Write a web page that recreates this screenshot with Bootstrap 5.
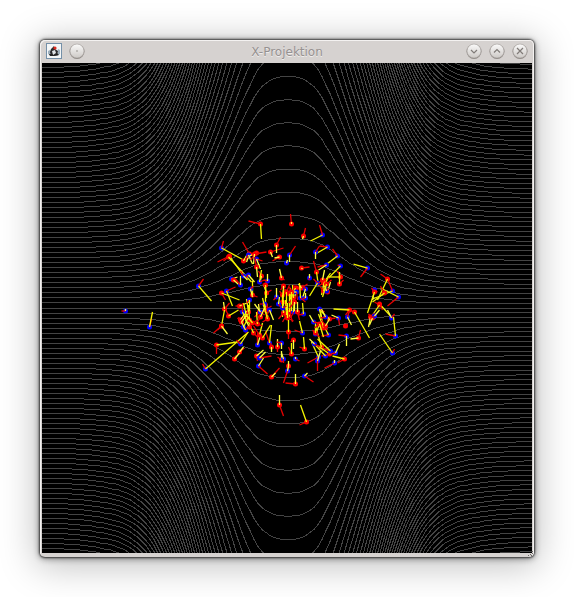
<!DOCTYPE html>
<html lang="de">
<head>
<meta charset="utf-8">
<meta name="viewport" content="width=device-width, initial-scale=1">
<title>X-Projektion</title>
<link href="https://cdn.jsdelivr.net/npm/bootstrap@5.3.0/dist/css/bootstrap.min.css" rel="stylesheet">
<style>
body { background: #fff; font-family: "DejaVu Sans", sans-serif; }
.desktop { padding: 40px; }
.app-window {
  background: #d6d2d0;
  border-radius: 5px;
  padding: 0 2px 4px;
  box-shadow: 0 0 2px 1px rgba(0,0,0,.65), 0 1px 6px 1px rgba(0,0,0,.4), 0 5px 36px 4px rgba(0,0,0,.25), inset 1px 1px 0 #f4f2f1, inset -1px 0 0 #f4f2f1;
}
.title-bar {
  display: grid;
  grid-template-columns: 1fr auto 1fr;
  height: 23px;
  padding: 0 4px 2px;
}
.window-title { font-size: 12px; line-height: 20px; padding-top: 2px; color: #969191; text-shadow: 0 1px 0 #efedec; }
.tools-start, .tools-end { gap: 7px; }
.tool-btn { width: 16px; height: 16px; line-height: 0; }
.tool-btn svg { overflow: visible; }
.plot { width: 100%; background: #000; }
.field-lines { fill: none; stroke: #444; shape-rendering: crispEdges; }
.vectors { fill: none; stroke-width: 1.3; }
</style>
<script src="https://cdn.jsdelivr.net/npm/bootstrap@5.3.0/dist/js/bootstrap.bundle.min.js"></script>
</head>
<body>
<main class="desktop">
  <section class="app-window position-relative" aria-label="X-Projektion">
    <header class="title-bar align-items-center">
      <div class="d-flex align-items-center tools-start">
        <svg width="16" height="16" viewBox="0 0 16 16" aria-hidden="true">
          <rect x=".5" y=".5" width="15" height="15" fill="#f4f6f7" stroke="#7590a8"/>
          <path d="M2 8l2-1 1 3-1 2-2-1zM12 6l2 1v4l-3 2z" fill="#9fb0bd"/>
          <path d="M4 9 5 6l3-3 1 3 3 2-1 4-2 1-4 0z" fill="#2a2a2c"/>
          <path d="M6 8l3-1 1 3-3 2z" fill="#dfe3e6"/>
          <circle cx="9" cy="5" r="1.600" fill="#e02a20"/>
          <path d="M3 11h3l2 2H4zM9 13l2-3 2 2z" fill="#222"/>
        </svg>
        <button type="button" class="tool-btn btn border-0 p-0" aria-label="Fenstermenü"><svg width="16" height="16" viewBox="0 0 16 16"><circle cx="8" cy="8.500" r="7.500" fill="#8b8581"/><circle cx="8" cy="8" r="7" fill="url(#knob)" stroke="#aaa5a1" stroke-width=".6"/><circle cx="8" cy="8" r=".8" fill="#8d8884"/></svg></button>
      </div>
      <div class="window-title">X-Projektion</div>
      <div class="d-flex align-items-center justify-content-end tools-end">
        <button type="button" class="tool-btn btn border-0 p-0" aria-label="Minimieren"><svg width="16" height="16" viewBox="0 0 16 16"><circle cx="8" cy="8.500" r="7.500" fill="#8b8581"/><circle cx="8" cy="8" r="7" fill="url(#knob)" stroke="#aaa5a1" stroke-width=".6"/><path d="M5 7l3 3 3-3" fill="none" stroke="#807b78" stroke-width="1.200"/></svg></button>
        <button type="button" class="tool-btn btn border-0 p-0" aria-label="Maximieren"><svg width="16" height="16" viewBox="0 0 16 16"><circle cx="8" cy="8.500" r="7.500" fill="#8b8581"/><circle cx="8" cy="8" r="7" fill="url(#knob)" stroke="#aaa5a1" stroke-width=".6"/><path d="M5 9.500l3-3 3 3" fill="none" stroke="#807b78" stroke-width="1.200"/></svg></button>
        <button type="button" class="tool-btn btn border-0 p-0" aria-label="Schließen"><svg width="16" height="16" viewBox="0 0 16 16"><circle cx="8" cy="8.500" r="7.500" fill="#8b8581"/><circle cx="8" cy="8" r="7" fill="url(#knob)" stroke="#aaa5a1" stroke-width=".6"/><path d="M5 5l6 6M11 5l-6 6" fill="none" stroke="#807b78" stroke-width="1.200"/></svg></button>
      </div>
    </header>
    <svg class="plot d-block" viewBox="42 63 490 490" role="img" aria-label="Teilchen im Feld">
      <defs><linearGradient id="knob" x2="0" y2="1"><stop stop-color="#fbfafa"/><stop offset="1" stop-color="#cdc9c6"/></linearGradient></defs>
      <g class="field-lines" id="lines"></g>
      <g class="vectors" id="particles"></g>
    </svg>
    <svg class="position-absolute bottom-0 end-0" width="7" height="7" viewBox="0 0 7 7" aria-hidden="true"><path d="M1 5h1v1H1zM3 4h1v1H3zM5 1h1v1H5zM4 5h1v1H4zM5 3h1v1H5z" fill="#6b6765"/></svg>
  </section>
</main>
<script>
const NS = 'http://www.w3.org/2000/svg';
const cx = 288, cy = 308;
function add(parent, name, attrs) {
  const el = document.createElementNS(NS, name);
  for (const k in attrs) el.setAttribute(k, attrs[k]);
  parent.appendChild(el);
}

// Field lines: spacing falls off from the centre; width of the bell by distance.
const bell = [[0,130],[24,113],[37,92],[45,87],[51,84],[57,82],[61,81],[69,80],[100,78],[140,78],[158,79],[170,80],[190,83],[250,88]];
function spacing(x) {
  const d = Math.abs(x - cx);
  let i = 1;
  while (i < bell.length - 1 && bell[i][0] < d) i++;
  const [a, wa] = bell[i - 1], [b, wb] = bell[i];
  const w = wa + (wb - wa) * (d - a) / (b - a);
  const base = x < cx ? 5 : 4.77;
  return base + (23.15 - base) * Math.exp(-((d / w) ** 2));
}
const lines = document.getElementById('lines');
for (let k = -51; k <= 51; k++) {
  let pts = '';
  for (let x = 42; x <= 534; x += 4) pts += x + ',' + (Math.floor(cy + k * spacing(x)) + .5) + ' ';
  add(lines, 'polyline', { points: pts });
}

// Particles: colour, position, end of yellow vector, end of red vector.
const data = `
b 125 311 125 309 121 311|b 149 327 152 312 151 319
r 260 224 261 239 248 221|r 291 224 291 222 290 214|b 221 248 243 260 223 241|r 229 256 243 276 217 262
r 228 257 251 282 223 261|r 243 261 248 252 250 257|r 249 254 246 262 242 242|b 248 255 252 264 245 259
r 256 253 249 256 250 260|r 270 252 272 257 283 248|r 276 245 276 253 280 237|r 279 257 274 258 272 261
r 254 254 253 264 266 252|b 256 259 260 269 262 261|r 256 267 257 277 254 257|b 289 255 289 262 295 246
b 286 263 287 260 287 263|b 248 275 254 282 245 278|b 198 286 211 301 203 279|b 231 279 237 277 234 282
r 233 280 241 287 240 284|b 240 285 240 276 235 279|b 226 291 232 306 235 287|r 221 293 239 300 225 300
r 261 276 259 284 258 271|b 267 281 267 274 263 280|b 259 282 261 270 264 280|r 252 295 252 281 257 297
b 250 289 252 297 253 286|r 281 278 279 269 284 280|r 283 286 283 295 280 290|r 296 288 294 298 301 286
r 266 293 263 284 271 290|b 276 297 276 288 273 300|r 224 309 223 302 229 303|r 228 316 238 310 225 309
r 239 306 249 302 235 306|b 243 276 247 280 240 271|r 265 285 266 298 262 284
r 248 312 246 299 239 311|r 249 320 248 305 255 324|r 246 317 243 303 240 318|r 240 320 246 311 238 317
b 249 300 249 311 246 303|r 259 312 258 304 254 317|r 265 305 265 291 269 309|b 242 312 247 323 242 303
b 264 304 268 319 259 304|r 265 310 262 298 271 306|b 269 310 273 320 265 318
r 286 292 286 310 289 285|r 289 294 289 317 284 289|r 282 295 282 317 279 291|r 282 302 283 289 287 305
r 286 315 285 300 282 322|r 289 312 290 288 292 322|r 283 313 283 300 278 319|r 287 318 287 303 293 321
b 278 304 279 297 281 308|b 293 312 294 297 290 318|b 282 308 283 290 286 306|r 293 298 292 285 288 303
r 295 288 290 299 293 285|r 301 288 298 284 307 284|b 305 289 302 298 302 285|b 305 298 305 293 301 299
b 300 298 299 283 305 302|b 296 292 291 292 297 300|r 291 292 291 311 289 287|r 294 302 294 311 289 308
r 297 312 297 302 299 320|b 303 314 302 303 298 315
r 303 236 302 239 305 228|b 322 235 310 241 319 225|b 327 247 315 254 319 246|b 315 252 315 259 319 246
b 337 256 325 265 332 249|b 326 265 318 270 317 267|r 316 272 318 286 313 261|b 340 266 328 278 337 265
r 301 268 302 269 309 267|b 309 278 309 274 308 280|b 317 283 309 296 313 279|r 340 277 327 277 337 271
r 339 284 339 272 343 280|r 323 283 330 273 318 286|r 324 281 321 295 329 278|r 322 280 324 270 318 283
r 323 291 327 278 320 287|r 327 292 330 282 324 287|b 326 291 324 285 328 288|r 326 284 322 297 331 280
b 367 268 353 264 360 277|r 387 279 377 300 380 274|b 392 291 372 299 388 281|b 398 297 380 288 387 306
b 374 290 372 300 377 292|r 374 292 367 313 371 288|r 384 293 372 302 380 286|r 379 304 391 317 382 310
r 379 305 370 318 374 302|r 349 310 333 309 345 315|r 354 312 369 338 349 310|b 319 309 321 318 324 312
b 338 318 331 315 339 325|r 329 319 319 310 335 318|b 347 317 351 325 349 311|r 370 317 368 327 374 313
r 372 318 369 325 368 314|b 374 316 379 310 371 318|b 391 318 387 310 394 314
b 302 333 299 321 294 330|r 293 340 293 349 290 342|r 291 354 291 343 288 347|r 304 349 303 337 299 347
b 295 359 295 357 299 361|b 304 376 307 373 313 382|r 295 384 295 374 285 383|r 306 422 300 405 299 425
b 328 335 322 323 321 336|r 345 326 345 326 347 324|b 346 336 346 346 338 335|r 358 338 350 339 360 330
b 395 336 393 317 385 334|b 392 353 379 334 394 349|r 344 359 332 356 337 363|b 334 363 334 360 324 368
r 321 347 315 326 328 351|r 329 354 316 345 321 356|b 335 353 339 344 330 354|b 330 351 317 339 325 349
b 325 356 313 343 329 353|b 318 357 311 342 307 363|b 317 361 320 351 317 371|b 314 344 309 339 319 347
r 322 325 318 314 327 330|r 323 328 320 312 315 325|r 325 326 329 319 321 320|b 325 317 321 309 320 318
b 315 334 320 322 312 330|r 315 333 315 322 319 337|b 313 322 309 315 318 323|r 319 324 323 337 314 328
r 221 326 224 310 213 333|r 221 326 227 334 217 330|r 216 345 237 342 216 354|b 205 369 248 332 202 364
b 240 344 247 333 236 340|r 239 352 243 347 244 348|r 234 359 239 353 236 355|r 241 322 247 314 237 318
b 257 345 260 335 257 336|b 269 343 271 325 265 331|r 271 347 271 352 270 343|r 277 347 277 339 277 352
b 281 343 281 349 276 342|r 256 356 263 350 257 361|b 259 358 265 352 271 356|b 258 366 263 358 267 374
r 271 377 275 373 279 368|r 281 360 281 351 277 357|b 283 359 281 353 283 363|r 288 366 288 361 286 371
b 287 371 288 366 283 383|r 279 405 279 395 283 416|r 288 332 288 320 288 339|r 259 335 262 323 253 326
r 262 338 270 325 257 333|r 253 333 248 322 257 337|b 243 327 248 317 246 333|r 249 327 245 320 244 332
r 257 324 256 312 262 326|r 252 323 245 314 257 320|b 260 312 254 304 264 315|r 267 319 263 305 262 322
r 260 317 264 308 257 322|b 245 330 241 322 249 326`;
const particles = document.getElementById('particles');
for (const item of data.trim().split(/[|\n]/)) {
  const [c, ...n] = item.split(' ');
  const [x, y, yx, yy, rx, ry] = n.map((v, i) => i % 2 ? v - 0 : +v + .5);
  const color = c === 'r' ? '#f00' : '#00f';
  add(particles, 'circle', { cx: x, cy: y, r: 2.5, fill: color });
  add(particles, 'path', { d: `M${x} ${y}L${rx} ${ry}`, stroke: '#e80000' });
  // Short vectors point along the view axis and are drawn brighter.
  const len = Math.hypot(yx - x, yy - y);
  add(particles, 'path', { d: `M${x} ${y}L${yx} ${yy}`, stroke: len < 11 ? '#ffff40' : '#f4f400' });
}
</script>
</body>
</html>
